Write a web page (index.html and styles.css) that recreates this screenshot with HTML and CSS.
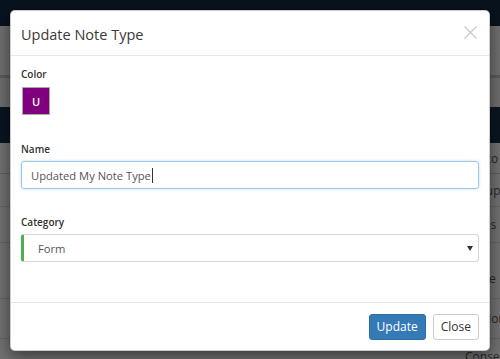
FILE: index.html
```html
<!DOCTYPE html>
<html>
<head>
<meta charset="utf-8">
<link rel="stylesheet" href="styles.css">
</head>
<body>
<div class="page">
  <div class="navbar"></div>
  <div class="toolbar"></div>
  <div class="band"></div>
  <div class="subbar"></div>
  <div class="darkbar"></div>
  <div class="table">
    <div class="row r-head"><span class="cell">Photo</span></div>
    <div class="row r1"><span class="cell">Group</span></div>
    <div class="row r2"><span class="cell">Items</span></div>
    <div class="row r3"><span class="cell">Stage</span></div>
    <div class="row r4"><span class="cell">Section</span></div>
    <div class="row r5"><span class="cell">Consent</span></div>
  </div>
</div>

<div class="modal">
  <div class="modal-header">
    <h4 class="modal-title">Update Note Type</h4>
    <button class="close" aria-label="Close">
      <svg width="13" height="13" viewBox="0 0 13 13"><path d="M0.5 0.5 L12.5 12.5 M12.5 0.5 L0.5 12.5" stroke="#c8c8c8" stroke-width="1.3" fill="none"/></svg>
    </button>
  </div>
  <div class="modal-body">
    <div class="group">
      <label class="lbl">Color</label>
      <div class="swatch">U</div>
    </div>
    <div class="group">
      <label class="lbl">Name</label>
      <div class="input">Updated My Note Type<span class="caret"></span></div>
    </div>
    <div class="group">
      <label class="lbl">Category</label>
      <div class="select"><span>Form</span><span class="arrow"></span></div>
    </div>
  </div>
  <div class="modal-footer">
    <button class="btn btn-primary">Update</button>
    <button class="btn btn-default">Close</button>
  </div>
</div>
</body>
</html>
```

FILE: styles.css
```css
* { box-sizing: border-box; }
html, body { margin: 0; padding: 0; }
body {
  width: 500px;
  height: 359px;
  overflow: hidden;
  font-family: "Open Sans", "DejaVu Sans", sans-serif;
  background: #717171;
  position: relative;
}
.page { display: flex; flex-direction: column; }
.navbar { height: 26px; background: #08121d; }
.toolbar { height: 49px; background: #6f6f6f; }
.band { height: 3px; background: #5a5a5a; }
.subbar { height: 29px; background: #6d6d6d; }
.darkbar { height: 36px; background: #0a1520; }
.table { display: flex; flex-direction: column; }
.row {
  border-bottom: 1px solid #646464;
  display: flex;
  align-items: center;
  justify-content: flex-end;
  color: #262626;
  font-size: 12px;
  line-height: 17px;
}
.r-head { height: 31px; border-bottom-color: #5e5e5e; }
.r1 { height: 33px; }
.r2 { height: 36px; }
.r3 { height: 56px; padding-top: 16px; }
.r4 { height: 40px; }
.r5 { height: 30px; align-items: flex-start; padding-top: 9px; border-bottom: 0; }
.cell { width: 35px; white-space: nowrap; overflow: hidden; }

.modal {
  position: absolute;
  left: 10px;
  top: 10px;
  width: 480px;
  height: 341px;
  background: #fff;
  border: 1px solid rgba(0,0,0,0.2);
  border-radius: 5px;
  box-shadow: 0 5px 15px rgba(0,0,0,0.5);
  display: flex;
  flex-direction: column;
}
.modal-header {
  padding: 13px 10px 9px;
  border-bottom: 1px solid #e8e8e8;
  display: flex;
  align-items: flex-start;
  justify-content: space-between;
}
.modal-title {
  margin: 0;
  font-size: 14.5px;
  line-height: 22px;
  font-weight: 400;
  color: #3a3a3a;
}
.close {
  border: 0;
  background: none;
  padding: 0;
  margin: 2px 2px 0 0;
  line-height: 0;
}
.modal-body {
  padding: 10px 10px 0;
  flex: 1;
}
.group { display: flex; flex-direction: column; align-items: flex-start; }
.group + .group { margin-top: 26px; }
.group:last-child { margin-top: 25px; }
.lbl {
  font-size: 10px;
  line-height: 17px;
  font-weight: 600;
  color: #333;
  margin-bottom: 3px;
}
.swatch {
  margin-top: 1px;
  width: 28px;
  height: 28px;
  background: #800080;
  border: 1px solid #a9a9a9;
  color: #fff;
  font-size: 11px;
  font-weight: 600;
  display: flex;
  align-items: center;
  justify-content: center;
  margin-left: 1px;
}
.input {
  width: 100%;
  height: 28px;
  border: 1px solid #9cc8ee;
  border-radius: 3px;
  box-shadow: 0 0 3px rgba(102,175,233,0.45);
  padding: 0 9px;
  font-size: 11.2px;
  color: #555;
  display: flex;
  align-items: center;
}
.caret {
  display: inline-block;
  width: 1px;
  height: 15px;
  background: #333;
  margin-left: 1px;
}
.select {
  width: 100%;
  height: 28px;
  border: 1px solid #d6d6d6;
  border-left: 3px solid #4cae4c;
  border-radius: 3px;
  padding: 0 5px 0 14px;
  font-size: 11.2px;
  color: #555;
  display: flex;
  align-items: center;
  justify-content: space-between;
}
.arrow {
  width: 0;
  height: 0;
  border-left: 3px solid transparent;
  border-right: 3px solid transparent;
  border-top: 5px solid #333;
}
.modal-footer {
  border-top: 1px solid #e8e8e8;
  padding: 11px 10px 10px;
  display: flex;
  justify-content: flex-end;
  gap: 7px;
}
.btn {
  font-family: inherit;
  font-size: 12px;
  height: 26px;
  padding: 0 7px;
  border-radius: 3px;
  border: 1px solid;
  line-height: 24px;
}
.btn-primary { background: #337ab7; border-color: #2e6da4; color: #fff; }
.btn-default { background: #fff; border-color: #ccc; color: #333; }
```
